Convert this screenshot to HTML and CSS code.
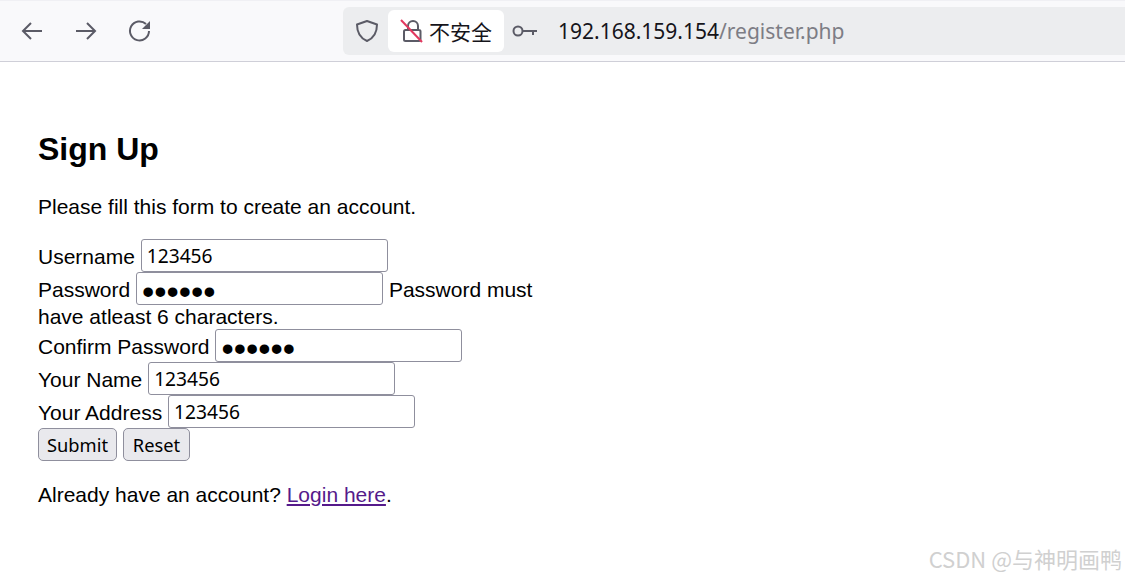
FILE: index.html
```html
<!doctype html>
<html lang="zh">
<head>
  <meta charset="UTF-8">
  <title>Sign Up</title>
  <link rel="stylesheet" href="styles.css">
</head>
<body>
  <header class="toolbar">
    <div class="nav">
      <svg class="icon" viewBox="0 0 24 24"><path d="M22 12H3M11 4l-8 8 8 8"/></svg>
      <svg class="icon" viewBox="0 0 24 24"><path d="M2 12h19M13 4l8 8-8 8"/></svg>
      <svg class="icon" viewBox="0 0 24 24"><path d="M21 12a9.500 9.500 0 1 1-3-7"/><path class="fill" d="M22 2v8h-8z"/></svg>
    </div>
    <div class="urlbar">
      <svg class="shield" viewBox="0 0 24 24"><path d="M12 2l10 3.500c0 8-3 13.500-10 16.500C5 19 2 13.500 2 5.500z"/></svg>
      <div class="insecure">
        <svg class="lock" viewBox="0 0 24 24">
          <path d="M8 11V7a5 5 0 0 1 10 0v4M4 12.500a1.500 1.500 0 0 1 1.500-1.500H19a1.500 1.500 0 0 1 1.500 1.500v8a1.500 1.500 0 0 1-1.500 1.500H5.500A1.500 1.500 0 0 1 4 20.500z"/>
          <path class="slash" d="M1 1l21 22"/>
        </svg>
        <span>不安全</span>
      </div>
      <svg class="key" viewBox="0 0 26 14"><circle cx="6" cy="7" r="4.500"/><path d="M10.500 7H25M21 7v4"/></svg>
      <div class="url">192.168.159.154<span class="path">/register.php</span></div>
    </div>
  </header>

  <main class="wrapper">
    <h2>Sign Up</h2>
    <p>Please fill this form to create an account.</p>
    <form class="signup">
      <label>Username</label> <input class="field" type="text" value="123456"><br>
      <label>Password</label> <input class="field secret" type="password" value="123456"> <span>Password must have atleast 6 characters.</span><br>
      <label>Confirm Password</label> <input class="field secret" type="password" value="123456"><br>
      <label>Your Name</label> <input class="field" type="text" value="123456"><br>
      <label>Your Address</label> <input class="field" type="text" value="123456"><br>
      <input class="btn" type="submit" value="Submit"> <input class="btn reset" type="reset" value="Reset">
    </form>
    <p class="login">Already have an account? <a href="#">Login here</a>.</p>
  </main>

  <footer class="watermark">CSDN @与神明画鸭</footer>
</body>
</html>
```
FILE: styles.css
```css
html, body {
    height: 100%;
}
body {
    margin: 0;
    position: relative;
    overflow: hidden;
    background: #fff;
    color: #000;
    font-family: "Liberation Sans", Arial, sans-serif;
    font-size: 21px;
}
.toolbar {
    height: 62px;
    box-sizing: border-box;
    padding: 6px 0 6px 20px;
    display: flex;
    align-items: stretch;
    background: #f9f9fb;
    border-bottom: 1px solid #cfcfd8;
    border-top: 1px solid #f0f0f4;
}
.nav {
    display: flex;
    align-items: center;
    gap: 30px;
    width: 323px;
}
.icon {
    width: 24px;
    height: 24px;
    fill: none;
    stroke: #5b5b66;
    stroke-width: 2;
}
.icon .fill {
    fill: #5b5b66;
    stroke: none;
}
.urlbar {
    flex: 1;
    display: flex;
    align-items: center;
    background: #ecedef;
    border-radius: 6px 0 0 6px;
    padding: 3px 0 3px 12px;
}
.shield {
    width: 24px;
    height: 24px;
    fill: none;
    stroke: #5b5b66;
    stroke-width: 2;
    stroke-linejoin: round;
}
.insecure {
    display: flex;
    align-items: center;
    gap: 5px;
    height: 100%;
    margin-left: 9px;
    padding: 0 12px 0 12px;
    background: #fff;
    border-radius: 6px;
    font-family: "Noto Sans CJK SC", sans-serif;
    font-size: 21px;
    color: #15141a;
}
.lock {
    width: 24px;
    height: 24px;
    fill: none;
    stroke: #5b5b66;
    stroke-width: 2;
}
.lock .slash {
    stroke: #e2385f;
}
.key {
    width: 26px;
    height: 14px;
    margin-left: 8px;
    fill: none;
    stroke: #5b5b66;
    stroke-width: 2;
}
.url {
    margin-left: 20px;
    font-family: "Noto Sans", "Open Sans", sans-serif;
    font-size: 21px;
    color: #15141a;
}
.path {
    color: #7d7d85;
}
.wrapper {
    width: 500px;
    padding: 68px 0 0 38px;
}
h2 {
    margin: 0 0 26px;
    font-size: 32px;
    line-height: 39px;
}
p {
    margin: 0;
    line-height: 24px;
}
.signup {
    margin-top: 20px;
    line-height: 24px;
}
.field {
    box-sizing: border-box;
    width: 247px;
    height: 33px;
    padding: 1px 5px;
    border: 1px solid #8f8f9d;
    border-radius: 3px;
    background: #fff;
    font-family: "Noto Sans", sans-serif;
    font-size: 19.2px;
    margin: 0;
    vertical-align: 1px;
}
.secret {
    padding: 6px 5px 0;
    font-family: "Liberation Sans", Arial, sans-serif;
    font-size: 35px;
    vertical-align: -7px;
}
.btn {
    box-sizing: border-box;
    height: 33px;
    padding: 0 8px;
    border: 1px solid #8f8f9d;
    border-radius: 5px;
    background: #e9e9ed;
    font-family: "Noto Sans", sans-serif;
    font-size: 18.3px;
    margin: 0;
}
.reset {
    padding: 0 9px;
}
.login {
    margin-top: 22px;
}
a {
    color: #551a8b;
}
.watermark {
    position: absolute;
    right: 3px;
    bottom: 5px;
    color: #d0d0d0;
    font-family: "Noto Sans CJK SC", sans-serif;
    font-size: 22px;
}
```
